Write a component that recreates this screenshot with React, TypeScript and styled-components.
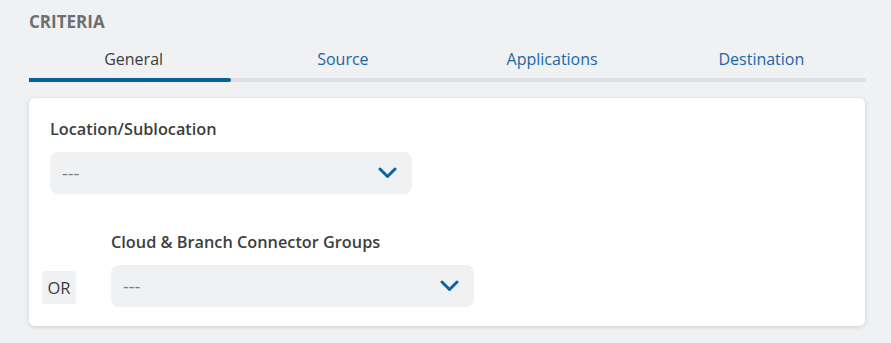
import React from "react";
import styled, { createGlobalStyle } from "styled-components";

const Global = createGlobalStyle`
  html, body { margin: 0; padding: 0; background: #f0f1f3; }
  body { font-family: "Open Sans", "Noto Sans", sans-serif; }
`;

const Page = styled.div`
  width: 891px;
  height: 343px;
  box-sizing: border-box;
  padding: 11px 25px 0 29px;
  background: #f0f1f3;
`;

const Heading = styled.div`
  font-size: 17px;
  font-weight: 700;
  color: #6e6f72;
  line-height: 21px;
`;

const Tabs = styled.div`
  display: grid;
  grid-template-columns: repeat(4, 1fr);
  margin-top: 16px;
  border-bottom: 4px solid #dedfe2;
  width: 837px;
`;

const Tab = styled.div<{ $active?: boolean }>`
  position: relative;
  text-align: center;
  font-size: 16px;
  line-height: 22px;
  padding-bottom: 8px;
  color: ${(p) => (p.$active ? "#3b3c3e" : "#1a66a8")};
  &::after {
    content: "";
    display: ${(p) => (p.$active ? "block" : "none")};
    position: absolute;
    left: 0;
    bottom: -4px;
    width: 202px;
    height: 4px;
    background: #04619e;
    border-radius: 0 2px 2px 0;
  }
`;

const Card = styled.div`
  margin-top: 16px;
  width: 836px;
  height: 228px;
  box-sizing: border-box;
  background: #fff;
  border-radius: 6px;
  box-shadow: 0 1px 5px rgba(0, 0, 0, 0.14);
  padding: 20px 0 0 21px;
`;

const Label = styled.div`
  font-size: 16.3px;
  font-weight: 600;
  color: #3d3e40;
  line-height: 22px;
`;

const Select = styled.div<{ $width: number }>`
  width: ${(p) => p.$width}px;
  height: 42px;
  box-sizing: border-box;
  background: #f0f1f3;
  border-radius: 8px;
  display: flex;
  align-items: center;
  justify-content: space-between;
  padding: 0 15px 0 12px;
  color: #7c7d80;
  font-size: 18px;
  margin-top: 12px;
`;

const Field = styled.div``;

const OrRow = styled.div`
  display: flex;
  align-items: flex-end;
  margin-top: 37px;
  margin-left: -8px;
  gap: 35px;
`;

const OrBox = styled.div`
  width: 34px;
  height: 33px;
  background: #f0f1f3;
  border-radius: 3px;
  display: flex;
  align-items: center;
  justify-content: center;
  font-size: 16.5px;
  color: #3a3b3d;
  margin-bottom: 3px;
`;

const Chevron = () => (
  <svg width="19" height="12" viewBox="0 0 19 12">
    <path d="M2 2 L9.5 9.5 L17 2" fill="none" stroke="#0a62a8" strokeWidth="3" strokeLinecap="round" strokeLinejoin="round" />
  </svg>
);

export default function App() {
  return (
    <>
      <Global />
      <Page>
        <Heading>CRITERIA</Heading>
        <Tabs>
          <Tab $active>General</Tab>
          <Tab>Source</Tab>
          <Tab>Applications</Tab>
          <Tab>Destination</Tab>
        </Tabs>
        <Card>
          <Field>
            <Label>Location/Sublocation</Label>
            <Select $width={362}>
              <span>---</span>
              <Chevron />
            </Select>
          </Field>
          <OrRow>
            <OrBox>OR</OrBox>
            <Field>
              <Label>Cloud &amp; Branch Connector Groups</Label>
              <Select $width={363}>
                <span>---</span>
                <Chevron />
              </Select>
            </Field>
          </OrRow>
        </Card>
      </Page>
    </>
  );
}
